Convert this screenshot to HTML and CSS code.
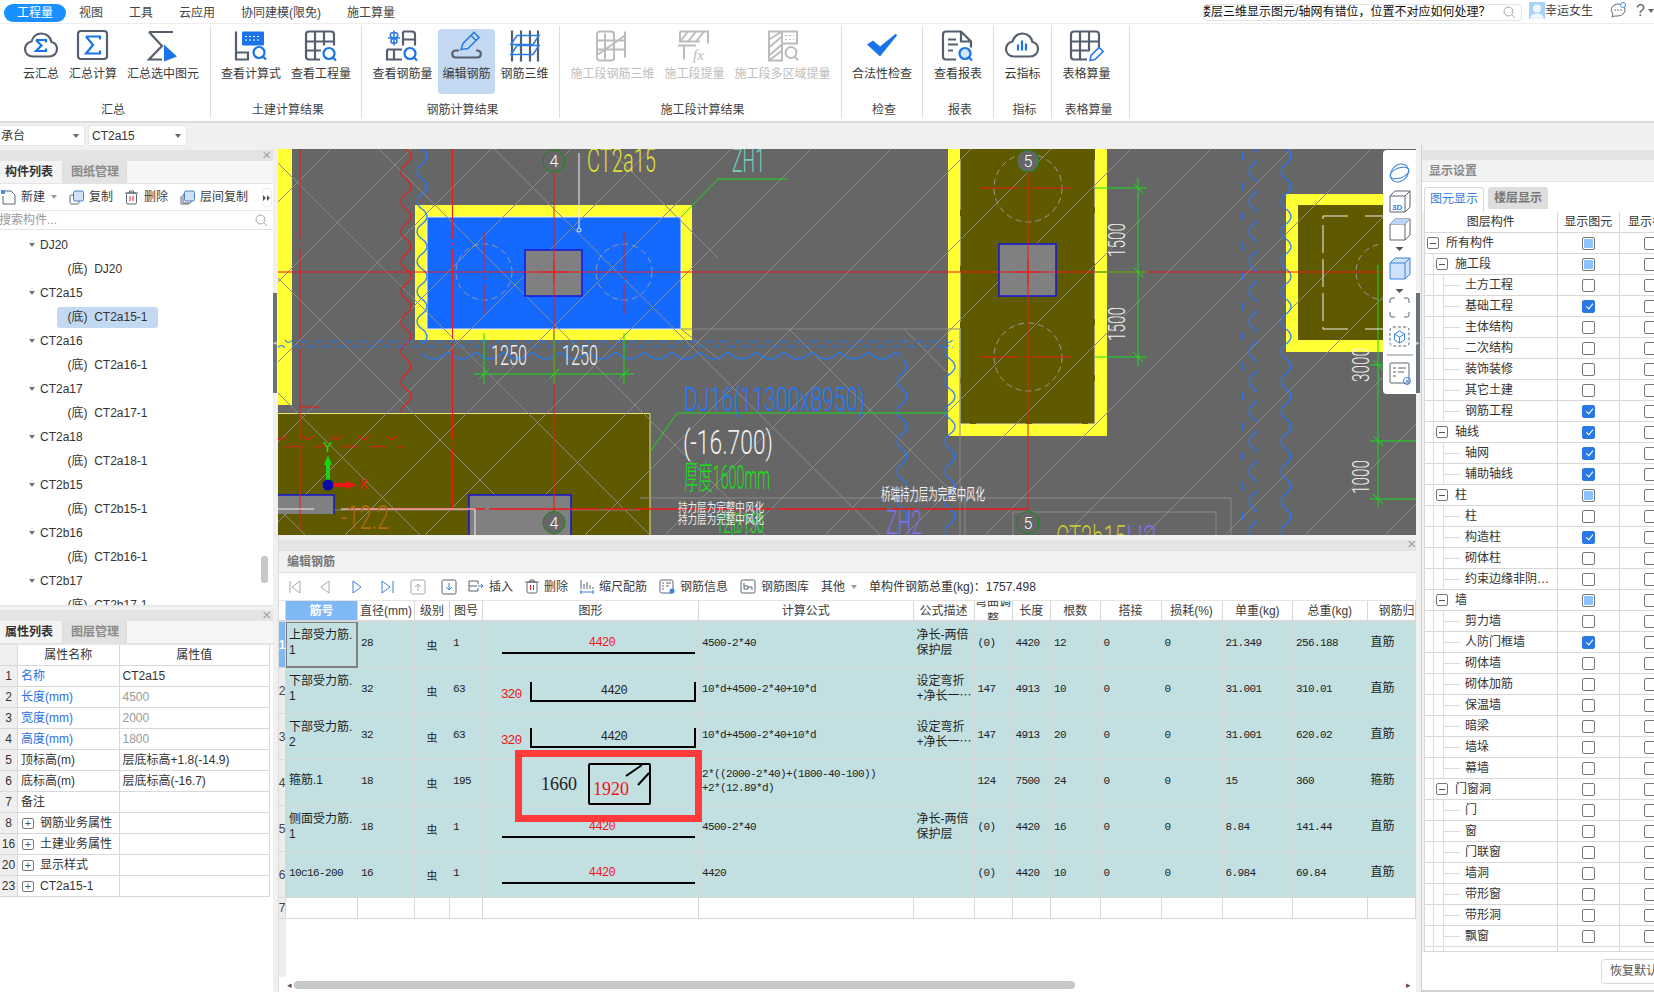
FILE: index.html
```html
<!DOCTYPE html>
<html lang="zh-CN">
<head>
<meta charset="utf-8">
<title>工程量</title>
<link rel="stylesheet" href="styles.css">
</head>
<body>
<div class="app">
  <header class="tabbar">
    <span class="tab active">工程量</span>
    <span class="tab t2">视图</span>
    <span class="tab">工具</span>
    <span class="tab">云应用</span>
    <span class="tab">协同建模(限免)</span>
    <span class="tab">施工算量<i class="newbadge"></i></span>
    <div class="topright">
      <div class="searchq"><span class="q">楼层三维显示图元/轴网有错位，位置不对应如何处理？</span>
        <svg class="ic14" viewBox="0 0 14 14"><circle cx="6.5" cy="6.5" r="4.5" class="s-lg"/><path d="M10 10l3 3" class="s-lg"/></svg></div>
      <svg class="avatar" viewBox="0 0 16 17"><rect width="16" height="17" fill="#a9d2fb"/><circle cx="8" cy="6.5" r="4" fill="#eef6ff"/><path d="M1 17c1-5 4-5.500 7-5.500s6 .5 7 5.500z" fill="#eef6ff"/></svg>
      <span class="uname">幸运女生</span>
      <svg class="chat" viewBox="0 0 18 18"><path d="M3 15l1-3c-4-5 0-10 5-10 4 0 7 3 7 6s-3 6-8 6c-2 0-3 0-5 1z" class="s-g1"/><circle cx="6" cy="8" r=".8" fill="#666"/><circle cx="9" cy="8" r=".8" fill="#666"/><circle cx="12" cy="8" r=".8" fill="#666"/><circle cx="14" cy="3" r="2.500" fill="#fff" stroke="#4a90e2"/></svg>
      <span class="help">?</span><i class="caret dk"></i>
    </div>
  </header>

  <section class="ribbon">
    <div class="grp g1"><div class="btns">
      <div class="btn"><svg class="ri" viewBox="0 0 36 36"><path d="M10 27c-4.500 0-8-3-8-7.500 0-4 3-7 6.500-7.500C10 7 14 4 18.500 4c5 0 9 3.500 10 8.500 3.300.7 5.500 3.500 5.500 7 0 4.300-3.500 7.500-8 7.500z" class="s-g"/><path d="M13 10.500h10v2.500M13 10.500l5.500 5.500-5.500 5.500h10V19" class="s-b"/></svg><span>云汇总</span></div>
      <div class="btn"><svg class="ri" viewBox="0 0 36 36"><rect x="3" y="1.500" width="29" height="28" rx="3" class="s-g"/><path d="M11 7h14v3M11 7l7 8.500-7 8.500h14v-3" class="s-b"/></svg><span>汇总计算</span></div>
      <div class="btn"><svg class="ri" viewBox="0 0 36 36"><path d="M4 2.500h24M4 2.500l13 14L4 30h13" class="s-g"/><path d="M19 15l13 12-13 5z" fill="#1a73e8"/></svg><span>汇总选中图元</span></div>
    </div><div class="gl">汇总</div></div>
    <div class="grp g2"><div class="btns">
      <div class="btn"><svg class="ri" viewBox="0 0 36 36"><path d="M3 2v28h12v-7H3" class="s-g"/><rect x="9" y="2" width="22" height="14" rx="1" fill="#1a73e8"/><path d="M12 7h16M12 10.500h16" stroke="#fff" stroke-dasharray="2 2" fill="none"/><circle cx="26" cy="23" r="5.500" class="s-b"/><path d="M30 27l3 3" class="s-b"/></svg><span>查看计算式</span></div>
      <div class="btn"><svg class="ri" viewBox="0 0 36 36"><path d="M17 30H6a3 3 0 0 1-3-3V5a3 3 0 0 1 3-3h22a3 3 0 0 1 3 3v11M3 12h27M3 21h15M12 2v28M21 2v14" class="s-g"/><circle cx="26" cy="24" r="5.500" class="s-b"/><path d="M30 28l3 3" class="s-b"/></svg><span>查看工程量</span></div>
    </div><div class="gl">土建计算结果</div></div>
    <div class="grp g3"><div class="btns">
      <div class="btn"><svg class="ri" viewBox="0 0 36 36"><path d="M19 2h9a3 3 0 0 1 3 3v11M19 2v14M19 10h12M3 20h15M3 20v10h15M10 20v10" class="s-g"/><path d="M10 1v15M4 8.500h12M10 3c-5 0-5 5 0 5.500M10 3c5 0 5 5 0 5.500M10 9c-4 0-4 5 0 5M10 9c4 0 4 5 0 5" class="s-b1"/><circle cx="26" cy="24" r="5.500" class="s-b"/><path d="M30 28l3 3" class="s-b"/></svg><span>查看钢筋量</span></div>
      <div class="btn on"><svg class="ri" viewBox="0 0 36 36"><path d="M11 21H8c-5 0-5 7 0 7h21c5 0 5-7 0-7h-1" class="s-g"/><path d="M13 20l2-6L26 3l5 5-11 11zM23 6l5 5" class="s-b1"/></svg><span>编辑钢筋</span></div>
      <div class="btn"><svg class="ri" viewBox="0 0 36 36"><path d="M5 1v31M14 1v31M23 1v31M31 1v31" class="s-g"/><path d="M4 15l6-9h22l-6 9zM4 25l6-9h22l-6 9z" class="s-b1"/></svg><span>钢筋三维</span></div>
    </div><div class="gl">钢筋计算结果</div></div>
    <div class="grp g4"><div class="btns dis">
      <div class="btn"><svg class="ri" viewBox="0 0 36 36"><rect x="3" y="2" width="17" height="29" rx="3" fill="#e2e2e2" class="s-d"/><path d="M3 11h28M3 20h28M11 4v26M20 4v26M31 2v26M4 25L31 6" class="s-d"/></svg><span>施工段钢筋三维</span></div>
      <div class="btn"><svg class="ri" viewBox="0 0 36 36"><path d="M4 2h28v12M4 2v10h20M4 12l8-10M12 12l8-10M20 12l8-10M2 16h18M8 16v14" class="s-d"/><text x="17" y="30" class="fx">fx</text></svg><span>施工段提量</span></div>
      <div class="btn"><svg class="ri" viewBox="0 0 36 36"><path d="M4 2h13v29H4zM4 10l13-8M4 18l13-11M4 26l13-11M4 31l13-10M17 2h15v12H17" class="s-d"/><path d="M20 6h9M20 10h9" stroke="#bbb" stroke-dasharray="2 2"/><circle cx="26" cy="23" r="5.500" class="s-d"/><path d="M30 27l3 4" class="s-d"/></svg><span>施工段多区域提量</span></div>
    </div><div class="gl">施工段计算结果</div></div>
    <div class="grp g5"><div class="btns">
      <div class="btn"><svg class="ri" viewBox="0 0 36 36"><path d="M3 15l6-4 7 6L32 4l1 2-17 21z" fill="#1a73e8"/></svg><span>合法性检查</span></div>
    </div><div class="gl">检查</div></div>
    <div class="grp g6"><div class="btns">
      <div class="btn"><svg class="ri" viewBox="0 0 36 36"><path d="M16 30H6a3 3 0 0 1-3-3V5a3 3 0 0 1 3-3h15l10 10v6M21 2v10h10M8 10h8M8 15h10M8 21h5" class="s-g"/><circle cx="25" cy="24" r="5.500" fill="#d3e6fb" class="s-bf"/><path d="M29 28l3 3" class="s-b"/></svg><span>查看报表</span></div>
    </div><div class="gl">报表</div></div>
    <div class="grp g7"><div class="btns">
      <div class="btn"><svg class="ri" viewBox="0 0 36 36"><path d="M10 27c-4.500 0-8-3-8-7.500 0-4 3-7 6.500-7.500C10 7 14 4 18.500 4c5 0 9 3.500 10 8.500 3.300.7 5.500 3.500 5.500 7 0 4.300-3.500 7.500-8 7.500z" class="s-g"/><path d="M14 15v6M18 11v10M22 14v7" class="s-b"/></svg><span>云指标</span></div>
    </div><div class="gl">指标</div></div>
    <div class="grp g8"><div class="btns">
      <div class="btn"><svg class="ri" viewBox="0 0 36 36"><path d="M19 30H6a3 3 0 0 1-3-3V5a3 3 0 0 1 3-3h22a3 3 0 0 1 3 3v13M3 12h28M3 21h18M12 2v28M21 2v20" class="s-g"/><path d="M22 31l1-5 8-8 4 4-8 8z" class="s-b1"/></svg><span>表格算量</span></div>
    </div><div class="gl">表格算量</div></div>
  </section>

  <div class="subbar">
    <div class="sel s1"><span>承台</span><i class="caret"></i></div>
    <div class="sel s2"><span>CT2a15</span><i class="caret"></i></div>
  </div>

  <main class="main">
    <aside class="left">
      <section class="lp lp1">
        <div class="pbar"><span class="x">×</span></div>
        <div class="ltabs"><span class="lt on">构件列表</span><span class="lt">图纸管理</span></div>
        <div class="ltool">
          <span class="ti"><svg class="ic15" viewBox="0 0 15 15"><path d="M3 1h7l4 4v9H2V6" class="s-g1"/><rect width="4" height="4" fill="#4a90e2"/></svg>新建<i class="caret cm"></i></span>
          <span class="ti"><svg class="ic15" viewBox="0 0 15 15"><rect x="1" y="5" width="9" height="9" rx="1.500" class="s-g1"/><rect x="4.500" y="1" width="10" height="10" rx="1.500" fill="#cfe2fa" stroke="#4a7fc1"/></svg>复制</span>
          <span class="ti"><svg class="ic13" viewBox="0 0 13 15"><rect x="1.500" y="3" width="10" height="11" rx="1.500" class="s-g1"/><path d="M0 3h13M4.500 3V1h4v2" class="s-g1"/><path d="M5 6v5M8 6v5" stroke="#d22" fill="none"/></svg>删除</span>
          <span class="ti"><svg class="ic15" viewBox="0 0 15 15"><path d="M1 6v8h8" class="s-g1"/><rect x="3" y="4" width="8" height="9" rx="1" class="s-g1"/><rect x="4.500" y="1" width="10" height="10" rx="1.500" fill="#cfe2fa" stroke="#4a7fc1"/></svg>层间复制</span>
          <span class="more"><svg class="morei" viewBox="0 0 8 8"><path d="M0 1l3 3-3 3zM4 1l3 3-3 3z" fill="#555"/></svg></span>
        </div>
        <div class="lsearch"><span>搜索构件...</span><svg class="ic14" viewBox="0 0 14 14"><circle cx="6.500" cy="6.500" r="4.500" class="s-lg"/><path d="M10 10l3 3" class="s-lg"/></svg></div>
        <div class="tree">
          <div class="tn"><i class="tc"></i>DJ20</div><div class="tl"><span>(底)&nbsp; DJ20</span></div>
          <div class="tn"><i class="tc"></i>CT2a15</div><div class="tl cur"><span>(底)&nbsp; CT2a15-1</span></div>
          <div class="tn"><i class="tc"></i>CT2a16</div><div class="tl"><span>(底)&nbsp; CT2a16-1</span></div>
          <div class="tn"><i class="tc"></i>CT2a17</div><div class="tl"><span>(底)&nbsp; CT2a17-1</span></div>
          <div class="tn"><i class="tc"></i>CT2a18</div><div class="tl"><span>(底)&nbsp; CT2a18-1</span></div>
          <div class="tn"><i class="tc"></i>CT2b15</div><div class="tl"><span>(底)&nbsp; CT2b15-1</span></div>
          <div class="tn"><i class="tc"></i>CT2b16</div><div class="tl"><span>(底)&nbsp; CT2b16-1</span></div>
          <div class="tn"><i class="tc"></i>CT2b17</div><div class="tl"><span>(底)&nbsp; CT2b17-1</span></div>
          <i class="vthumb"></i>
        </div>
      </section>
      <section class="lp lp2">
        <div class="pbar"><span class="x">×</span></div>
        <div class="ltabs"><span class="lt on">属性列表</span><span class="lt">图层管理</span></div>
        <div class="ptable">
          <div class="ph idx"></div><div class="ph">属性名称</div><div class="ph">属性值</div>
          <div class="idx">1</div><div class="pn blue">名称</div><div class="pv">CT2a15</div>
          <div class="idx">2</div><div class="pn blue">长度(mm)</div><div class="pv gray">4500</div>
          <div class="idx">3</div><div class="pn blue">宽度(mm)</div><div class="pv gray">2000</div>
          <div class="idx">4</div><div class="pn blue">高度(mm)</div><div class="pv gray">1800</div>
          <div class="idx">5</div><div class="pn">顶标高(m)</div><div class="pv">层底标高+1.8(-14.9)</div>
          <div class="idx">6</div><div class="pn">底标高(m)</div><div class="pv">层底标高(-16.7)</div>
          <div class="idx">7</div><div class="pn">备注</div><div class="pv"></div>
          <div class="idx">8</div><div class="pn"><i class="plus">+</i>钢筋业务属性</div><div class="pv"></div>
          <div class="idx">16</div><div class="pn"><i class="plus">+</i>土建业务属性</div><div class="pv"></div>
          <div class="idx">20</div><div class="pn"><i class="plus">+</i>显示样式</div><div class="pv"></div>
          <div class="idx">23</div><div class="pn"><i class="plus">+</i>CT2a15-1</div><div class="pv"></div>
        </div>
      </section>
    </aside>

    <div class="split"><i class="grip">◂</i></div>

    <div class="center">
      <div class="canvas">
        <svg class="cad" viewBox="278 149 1138 386" width="1138" height="386">
          <defs>
            <pattern id="ha" width="80" height="80" patternUnits="userSpaceOnUse"><path d="M-8 88L88-8" stroke="#8a8a8a" fill="none"/></pattern>
            <pattern id="hb" width="115" height="115" patternUnits="userSpaceOnUse"><path d="M-8-8L123 123" stroke="#8a8a8a" fill="none"/></pattern>
            <pattern id="wvb" width="16" height="30" patternUnits="userSpaceOnUse" x="0" y="149"><path d="M6 0q10 7.500 0 15T6 30" stroke="#1e78ff" stroke-width="1.200" fill="none"/></pattern>
            <pattern id="wvr" width="16" height="30" patternUnits="userSpaceOnUse" x="0" y="149"><path d="M6 0q10 7.500 0 15T6 30" stroke="#f01818" stroke-width="1.200" fill="none"/></pattern>
            <pattern id="whb" width="15" height="8" patternUnits="userSpaceOnUse"><path d="M0 4q3.750 5 7.500 0T15 4" stroke="#1e78ff" stroke-width="1.200" fill="none"/></pattern>
            <pattern id="whc" width="28" height="12" patternUnits="userSpaceOnUse"><path d="M0 4q14 14 28 0" stroke="#1e78ff" stroke-width="1.200" fill="none"/></pattern>
            <pattern id="whr" width="28" height="12" patternUnits="userSpaceOnUse"><path d="M0 8q14-12 28 0" stroke="#f01818" stroke-width="1.200" fill="none"/></pattern>
          </defs>
          <rect x="278" y="149" width="1138" height="386" fill="#666"/>
          <rect x="278" y="149" width="14" height="256" class="yel"/>
          <rect x="415" y="205" width="277" height="135" class="yel"/>
          <rect x="427" y="217" width="254" height="112" fill="#1469ff" stroke="#e8eeff"/>
          <rect x="278" y="413" width="372" height="122" class="oli"/>
          <path d="M278 413.500H650V535" stroke="#e9e96a" fill="none"/>
          <rect x="948" y="149" width="159" height="287" class="yel"/>
          <rect x="960" y="149" width="135" height="275" class="oli"/>
          <path d="M960 160v264h135V160" stroke="#e8e8c0" stroke-dasharray="50 6" fill="none"/>
          <rect x="1286" y="194" width="130" height="158" class="yel"/>
          <rect x="1298" y="205" width="118" height="135" class="oli"/>
          <rect x="278" y="149" width="1138" height="386" fill="url(#ha)"/>
          <rect x="278" y="149" width="440" height="386" fill="url(#hb)"/>
          <rect x="718" y="329" width="232" height="206" fill="url(#hb)"/>
          <path d="M681 329H960V535M640 498H1231V535M1013 535V512H1216V535M965 498V535M681 329L720 360M278 510H640" stroke="#8a8a8a" fill="none"/>
          <rect x="525" y="250" width="57" height="46" class="col"/>
          <rect x="999" y="244" width="57" height="52" class="col"/>
          <rect x="278" y="495" width="56" height="19" class="colf"/>
          <rect x="469" y="495" width="102" height="40" class="colf"/>
          <path d="M278 495h56v19M469 535V495H571V535" class="colstroke"/>
          <g class="dc"><circle cx="484" cy="272" r="28"/><circle cx="624" cy="272" r="28"/><circle cx="1028" cy="188" r="34"/><circle cx="1028" cy="357" r="34"/><circle cx="1384" cy="272" r="28"/></g>
          <rect x="400" y="149" width="16" height="264" fill="url(#wvr)"/>
          <rect x="278" y="436" width="126" height="12" fill="url(#whr)"/>
          <rect x="416" y="149" width="16" height="195" fill="url(#wvb)"/>
          <rect x="278" y="340" width="675" height="8" fill="url(#whb)"/>
          <rect x="422" y="352" width="480" height="12" fill="url(#whc)"/>
          <rect x="892" y="360" width="16" height="175" fill="url(#wvb)"/>
          <rect x="944" y="345" width="16" height="190" fill="url(#wvb)"/>
          <rect x="1242" y="149" width="16" height="386" fill="url(#wvb)"/>
          <rect x="1280" y="149" width="16" height="386" fill="url(#wvb)"/>
          <path d="M278 272H1416M554 149V535M1028 149V509" class="red"/>
          <path d="M300 149V530M452.500 149V510" class="red dd"/>
          <path d="M484 232V314M624 232V314M980 188H1073M980 357H1073M540 272h28M554 262v20M1014 272h28M1028 258v28M1385 245V320" class="red dd2"/>
          <path d="M345 509H1028" class="red thick"/>
          <path d="M300 407h20" class="red"/>
          <path d="M681 217L718 179H788M650 452L677 413H947" class="grn"/>
          <path d="M474 374H634M484 333V384M554 333V384M624 333V384M479 379l10-10M549 379l10-10M619 379l10-10" class="grn"/>
          <path d="M1095 188H1147M1095 272H1147M1095 357H1147M1138 178V367M1133 183l10 10M1133 267l10 10M1133 352l10 10" class="grn"/>
          <path d="M1378 265V507M1370 441H1416M1370 499H1416M1370 365H1395M1373 360l10 10M1373 436l10 10M1373 494l10 10" class="grn"/>
          <path d="M579 153V228" class="wht"/><circle cx="579" cy="230" r="2" class="wht"/>
          <path d="M278 509h36M341 509H475M475 509V535" class="wht"/>
          <path d="M1348 216H1323V329H1348M1365 216H1385M1365 329H1385" class="wht" stroke-dasharray="28 6"/>
          <g class="lab"><circle cx="554" cy="161" r="11"/><circle cx="554" cy="522.500" r="11"/><circle cx="1028" cy="161" r="11"/><circle cx="1028" cy="522.500" r="11"/></g>
          <text x="554" y="167" class="lt4">4</text><text x="554" y="528.500" class="lt4">4</text><text x="1028" y="167" class="lt4">5</text><text x="1028" y="528.500" class="lt4">5</text>
          <text x="587" y="172" class="ct t-y" textLength="69" lengthAdjust="spacingAndGlyphs">CT2a15</text>
          <text x="732" y="172" class="ct t-t" textLength="33" lengthAdjust="spacingAndGlyphs">ZH1</text>
          <text x="491" y="365" class="ct2 t-w" textLength="36" lengthAdjust="spacingAndGlyphs">1250</text>
          <text x="562" y="365" class="ct2 t-w" textLength="36" lengthAdjust="spacingAndGlyphs">1250</text>
          <text x="684" y="411" class="ct3 t-b" textLength="181" lengthAdjust="spacingAndGlyphs">DJ16(11300x8950)</text>
          <text x="683" y="454" class="ct3 t-w" textLength="90" lengthAdjust="spacingAndGlyphs">(-16.700)</text>
          <text x="684" y="489" class="ct4 t-g" textLength="86" lengthAdjust="spacingAndGlyphs">厚度1600mm</text>
          <text x="716" y="533" class="ct2 t-g" textLength="48" lengthAdjust="spacingAndGlyphs">12@150</text>
          <text x="678" y="512" class="cn t-w" textLength="86" lengthAdjust="spacingAndGlyphs">持力层为完整中风化</text>
          <text x="678" y="524" class="cn t-w" textLength="86" lengthAdjust="spacingAndGlyphs">持力层为完整中风化</text>
          <text x="881" y="500" class="cn2 t-w" textLength="104" lengthAdjust="spacingAndGlyphs">桥端持力层为完整中风化</text>
          <text x="341" y="529" class="ct3 t-o" textLength="48" lengthAdjust="spacingAndGlyphs">-12.2</text>
          <text x="886" y="534" class="ct3 t-p" textLength="36" lengthAdjust="spacingAndGlyphs">ZH2</text>
          <text x="1056" y="549" class="ct3 t-yd" textLength="70" lengthAdjust="spacingAndGlyphs">CT2b15</text>
          <text x="1126" y="549" class="ct3 t-p" textLength="31" lengthAdjust="spacingAndGlyphs">U2</text>
          <text transform="translate(1125 257) rotate(-90)" class="ct5 t-w" textLength="34" lengthAdjust="spacingAndGlyphs">1500</text>
          <text transform="translate(1125 341) rotate(-90)" class="ct5 t-w" textLength="34" lengthAdjust="spacingAndGlyphs">1500</text>
          <text transform="translate(1369 382) rotate(-90)" class="ct5 t-w" textLength="34" lengthAdjust="spacingAndGlyphs">3000</text>
          <text transform="translate(1369 494) rotate(-90)" class="ct5 t-w" textLength="34" lengthAdjust="spacingAndGlyphs">1000</text>
          <path d="M328 480V464" stroke="#17d417" stroke-width="4"/><path d="M328 455l-4 10h8z" fill="#17d417"/>
          <path d="M333 485h14" stroke="#f01818" stroke-width="4"/><path d="M357 485l-11-4v8z" fill="#f01818"/>
          <circle cx="328" cy="485" r="5.500" fill="#0a0aa8"/>
          <text x="323" y="452" class="axt t-g">Y</text><text x="359" y="489" class="axt t-r">X</text>
        </svg>
        <div class="views">
          <svg class="vi" viewBox="0 0 33 244">
            <ellipse cx="16.500" cy="23" rx="8" ry="10" class="s-bl" transform="rotate(45 16.500 23)"/><ellipse cx="16.500" cy="23" rx="10" ry="5" class="s-bl" transform="rotate(-20 16.500 23)"/>
            <path d="M7 46l5-5h15v16l-5 5H7zM7 46h15v16M22 46l5-5" class="s-g1"/><text x="9" y="60" class="t3d">3D</text>
            <path d="M7 74l5-5h15v16l-5 5H7zM7 74h15v16M22 74l5-5" class="s-g1"/><path d="M7 74l5-5h15l-5 5z" fill="#bcd6f7"/>
            <path d="M12.500 97h8l-4 4z" fill="#555"/>
            <path d="M7 113l5-5h15v16l-5 5H7z" fill="#cfe2fa" stroke="#3b82dc"/><path d="M7 113h15v16M22 113l5-5" fill="none" stroke="#3b82dc"/>
            <path d="M12.500 139h8l-4 4z" fill="#555"/>
            <path d="M7 153v-3a2 2 0 0 1 2-2h3M21 148h3a2 2 0 0 1 2 2v3M26 162v3a2 2 0 0 1-2 2h-3M12 167H9a2 2 0 0 1-2-2v-3" class="s-g1"/>
            <rect x="7" y="177" width="19" height="19" rx="3" class="s-g1" stroke-dasharray="3 2"/><path d="M16.500 181l5 3v6l-5 3-5-3v-6zM11.500 184l5 3 5-3M16.500 187v6" class="s-bl"/>
            <path d="M4 205h26" stroke="#888"/>
            <path d="M8 213h17a1 1 0 0 1 1 1v19H8a1 1 0 0 1-1-1v-18a1 1 0 0 1 1-1zM10 218h3M15 218h8M10 222h3M15 222h6M10 226h3" class="s-g1"/><circle cx="24" cy="231" r="3.500" fill="#fff" class="s-bl"/><circle cx="24" cy="231" r="1" fill="#3b82dc"/>
          </svg>
        </div>
      </div>
      <section class="editor">
        <div class="ebar"><span class="x">×</span></div>
        <div class="etitle">编辑钢筋</div>
        <div class="etool">
          <svg class="nav" viewBox="0 0 31 16"><path d="M11 2v12M21 2l-8 6 8 6z" class="s-lg"/></svg>
          <svg class="nav" viewBox="0 0 31 16"><path d="M19 2l-8 6 8 6z" class="s-lg"/></svg>
          <svg class="nav" viewBox="0 0 31 16"><path d="M12 2l8 6-8 6z" class="s-bl"/></svg>
          <svg class="nav" viewBox="0 0 31 16"><path d="M10 2l8 6-8 6zM21 2v12" class="s-bl"/></svg>
          <svg class="nav" viewBox="0 0 31 16"><rect x="8" y="1" width="14" height="14" rx="1.500" class="s-lg"/><path d="M15 12V5M12 8l3-3 3 3" class="s-lg"/></svg>
          <svg class="nav" viewBox="0 0 31 16"><rect x="8" y="1" width="14" height="14" rx="1.500" class="s-g1"/><path d="M15 4v7M12 8l3 3 3-3" class="s-bl"/></svg>
          <div class="etools">
            <span class="ti"><svg class="ic16" viewBox="0 0 16 15"><path d="M1 2h9v3M10 9v3H1V2M1 7h8" class="s-g1"/><path d="M10 7h5M13 5l2 2-2 2" class="s-bl"/></svg>插入</span>
            <span class="ti"><svg class="ic14b" viewBox="0 0 14 15"><rect x="2" y="3" width="10" height="11" rx="1.500" class="s-g1"/><path d="M0 3h14M5 3V1h4v2" class="s-g1"/><path d="M5.500 6v5M8.500 6v5" stroke="#d22" fill="none"/></svg>删除</span>
            <span class="ti"><svg class="ic14b" viewBox="0 0 14 15"><path d="M1 1v9M4 5v5M7 3v7M10 6v4M13 8v2" class="s-g1"/><path d="M0 13h14M1 11v4M13 11v4" class="s-bl"/></svg>缩尺配筋</span>
            <span class="ti"><svg class="ic16" viewBox="0 0 16 15"><rect x="1" y="1" width="13" height="13" rx="1.500" class="s-g1"/><path d="M3 4h2M7 4h5M3 7h2M7 7h3M3 10h2" class="s-g1"/><circle cx="13" cy="12" r="2.500" fill="#3b82dc"/></svg>钢筋信息</span>
            <span class="ti"><svg class="ic16" viewBox="0 0 16 15"><rect x="1" y="1" width="14" height="13" rx="1.500" class="s-g1"/><path d="M4 4v6h4V7H4M8 8h4v3" class="s-g1"/></svg>钢筋图库</span>
            <span class="ti">其他<i class="caret cm"></i></span>
            <span class="total">单构件钢筋总重(kg)：1757.498</span>
          </div>
        </div>
        <div class="tablewrap">
          <div class="tr hd">
            <div class="c"></div><div class="c sel-h">筋号</div><div class="c">直径(mm)</div><div class="c">级别</div><div class="c">图号</div><div class="c">图形</div><div class="c">计算公式</div><div class="c">公式描述</div><div class="c wrap">弯曲调整</div><div class="c">长度</div><div class="c">根数</div><div class="c">搭接</div><div class="c">损耗(%)</div><div class="c">单重(kg)</div><div class="c">总重(kg)</div><div class="c left11">钢筋归类</div>
          </div>
          <div class="tr rw">
            <div class="c ix on">1</div><div class="c t active">上部受力筋.<br>1</div><div class="c m">28</div><div class="c g">虫</div><div class="c m">1</div>
            <div class="c s"><svg class="shape" viewBox="0 0 216 46"><text x="119" y="24" class="sm red-t">4420</text><path d="M19 31H212" class="bar"/></svg></div>
            <div class="c m">4500-2*40</div><div class="c t">净长-两倍<br>保护层</div><div class="c m">(0)</div><div class="c m">4420</div><div class="c m">12</div><div class="c m">0</div><div class="c m">0</div><div class="c m">21.349</div><div class="c m">256.188</div><div class="c t">直筋</div>
          </div>
          <div class="tr rw">
            <div class="c ix">2</div><div class="c t">下部受力筋.<br>1</div><div class="c m">32</div><div class="c g">虫</div><div class="c m">63</div>
            <div class="c s"><svg class="shape" viewBox="0 0 216 46"><text x="28" y="30" class="sm2 red-t">320</text><text x="131" y="26" class="sm">4420</text><path d="M48 14V33H212V14" class="bar"/></svg></div>
            <div class="c m">10*d+4500-2*40+10*d</div><div class="c t">设定弯折<br>+净长一⋯</div><div class="c m">147</div><div class="c m">4913</div><div class="c m">10</div><div class="c m">0</div><div class="c m">0</div><div class="c m">31.001</div><div class="c m">310.01</div><div class="c t">直筋</div>
          </div>
          <div class="tr rw">
            <div class="c ix">3</div><div class="c t">下部受力筋.<br>2</div><div class="c m">32</div><div class="c g">虫</div><div class="c m">63</div>
            <div class="c s"><svg class="shape" viewBox="0 0 216 46"><text x="28" y="30" class="sm2 red-t">320</text><text x="131" y="26" class="sm">4420</text><path d="M48 14V33H212V14" class="bar"/></svg></div>
            <div class="c m">10*d+4500-2*40+10*d</div><div class="c t">设定弯折<br>+净长一⋯</div><div class="c m">147</div><div class="c m">4913</div><div class="c m">20</div><div class="c m">0</div><div class="c m">0</div><div class="c m">31.001</div><div class="c m">620.02</div><div class="c t">直筋</div>
          </div>
          <div class="tr rw">
            <div class="c ix">4</div><div class="c t">箍筋.1</div><div class="c m">18</div><div class="c g">虫</div><div class="c m">195</div>
            <div class="c s"><svg class="shape" viewBox="0 0 216 46"><text x="76" y="30" class="big">1660</text><rect x="106" y="4" width="61" height="40" rx="1" class="bar"/><text x="128" y="35" class="big red-t">1920</text><path d="M143 16L159 5M155 25L166 13" class="bar"/></svg></div>
            <div class="c m">2*((2000-2*40)+(1800-40-100))<br>+2*(12.89*d)</div><div class="c t"></div><div class="c m">124</div><div class="c m">7500</div><div class="c m">24</div><div class="c m">0</div><div class="c m">0</div><div class="c m">15</div><div class="c m">360</div><div class="c t">箍筋</div>
          </div>
          <div class="tr rw">
            <div class="c ix">5</div><div class="c t">侧面受力筋.<br>1</div><div class="c m">18</div><div class="c g">虫</div><div class="c m">1</div>
            <div class="c s"><svg class="shape" viewBox="0 0 216 46"><text x="119" y="24" class="sm red-t">4420</text><path d="M19 31H212" class="bar"/></svg></div>
            <div class="c m">4500-2*40</div><div class="c t">净长-两倍<br>保护层</div><div class="c m">(0)</div><div class="c m">4420</div><div class="c m">16</div><div class="c m">0</div><div class="c m">0</div><div class="c m">8.84</div><div class="c m">141.44</div><div class="c t">直筋</div>
          </div>
          <div class="tr rw">
            <div class="c ix">6</div><div class="c m">10c16-200</div><div class="c m">16</div><div class="c g">虫</div><div class="c m">1</div>
            <div class="c s"><svg class="shape" viewBox="0 0 216 46"><text x="119" y="24" class="sm red-t">4420</text><path d="M19 31H212" class="bar"/></svg></div>
            <div class="c m">4420</div><div class="c t"></div><div class="c m">(0)</div><div class="c m">4420</div><div class="c m">10</div><div class="c m">0</div><div class="c m">0</div><div class="c m">6.984</div><div class="c m">69.84</div><div class="c t">直筋</div>
          </div>
          <div class="tr blank">
            <div class="c ix">7</div><div class="c"></div><div class="c"></div><div class="c"></div><div class="c"></div><div class="c"></div><div class="c"></div><div class="c"></div><div class="c"></div><div class="c"></div><div class="c"></div><div class="c"></div><div class="c"></div><div class="c"></div><div class="c"></div><div class="c"></div>
          </div>
          <div class="trest"><i></i></div>
          <div class="redframe"></div>
        </div>
        <div class="hscroll"><i class="ar">◂</i><i class="thumb"></i><i class="ar r">▸</i></div>
      </section>
    </div>

    <div class="split"><i class="grip">▸</i></div>

    <aside class="right">
      <div class="pbar"></div>
      <div class="rtitle">显示设置</div>
      <div class="rtabs"><span class="rt on">图元显示</span><span class="rt">楼层显示</span></div>
      <div class="dtable">
        <div class="dc1 dh">图层构件</div><div class="dc1 dh">显示图元</div><div class="dc1 dh cl">显示名称</div>
        <div class="dn l0"><i class="minus"></i>所有构件</div><div class="dc1"><i class="cb pt"></i></div><div class="dc1"><i class="cb"></i></div>
        <div class="dn l1"><i class="minus"></i>施工段</div><div class="dc1"><i class="cb pt"></i></div><div class="dc1"><i class="cb"></i></div>
        <div class="dn l2">土方工程</div><div class="dc1"><i class="cb"></i></div><div class="dc1"><i class="cb"></i></div>
        <div class="dn l2">基础工程</div><div class="dc1"><i class="cb ck"></i></div><div class="dc1"><i class="cb"></i></div>
        <div class="dn l2">主体结构</div><div class="dc1"><i class="cb"></i></div><div class="dc1"><i class="cb"></i></div>
        <div class="dn l2">二次结构</div><div class="dc1"><i class="cb"></i></div><div class="dc1"><i class="cb"></i></div>
        <div class="dn l2">装饰装修</div><div class="dc1"><i class="cb"></i></div><div class="dc1"><i class="cb"></i></div>
        <div class="dn l2">其它土建</div><div class="dc1"><i class="cb"></i></div><div class="dc1"><i class="cb"></i></div>
        <div class="dn l2">钢筋工程</div><div class="dc1"><i class="cb ck"></i></div><div class="dc1"><i class="cb"></i></div>
        <div class="dn l1"><i class="minus"></i>轴线</div><div class="dc1"><i class="cb ck"></i></div><div class="dc1"><i class="cb"></i></div>
        <div class="dn l2">轴网</div><div class="dc1"><i class="cb ck"></i></div><div class="dc1"><i class="cb"></i></div>
        <div class="dn l2">辅助轴线</div><div class="dc1"><i class="cb ck"></i></div><div class="dc1"><i class="cb"></i></div>
        <div class="dn l1"><i class="minus"></i>柱</div><div class="dc1"><i class="cb pt"></i></div><div class="dc1"><i class="cb"></i></div>
        <div class="dn l2">柱</div><div class="dc1"><i class="cb"></i></div><div class="dc1"><i class="cb"></i></div>
        <div class="dn l2">构造柱</div><div class="dc1"><i class="cb ck"></i></div><div class="dc1"><i class="cb"></i></div>
        <div class="dn l2">砌体柱</div><div class="dc1"><i class="cb"></i></div><div class="dc1"><i class="cb"></i></div>
        <div class="dn l2">约束边缘非阴…</div><div class="dc1"><i class="cb"></i></div><div class="dc1"><i class="cb"></i></div>
        <div class="dn l1"><i class="minus"></i>墙</div><div class="dc1"><i class="cb pt"></i></div><div class="dc1"><i class="cb"></i></div>
        <div class="dn l2">剪力墙</div><div class="dc1"><i class="cb"></i></div><div class="dc1"><i class="cb"></i></div>
        <div class="dn l2">人防门框墙</div><div class="dc1"><i class="cb ck"></i></div><div class="dc1"><i class="cb"></i></div>
        <div class="dn l2">砌体墙</div><div class="dc1"><i class="cb"></i></div><div class="dc1"><i class="cb"></i></div>
        <div class="dn l2">砌体加筋</div><div class="dc1"><i class="cb"></i></div><div class="dc1"><i class="cb"></i></div>
        <div class="dn l2">保温墙</div><div class="dc1"><i class="cb"></i></div><div class="dc1"><i class="cb"></i></div>
        <div class="dn l2">暗梁</div><div class="dc1"><i class="cb"></i></div><div class="dc1"><i class="cb"></i></div>
        <div class="dn l2">墙垛</div><div class="dc1"><i class="cb"></i></div><div class="dc1"><i class="cb"></i></div>
        <div class="dn l2">幕墙</div><div class="dc1"><i class="cb"></i></div><div class="dc1"><i class="cb"></i></div>
        <div class="dn l1"><i class="minus"></i>门窗洞</div><div class="dc1"><i class="cb"></i></div><div class="dc1"><i class="cb"></i></div>
        <div class="dn l2">门</div><div class="dc1"><i class="cb"></i></div><div class="dc1"><i class="cb"></i></div>
        <div class="dn l2">窗</div><div class="dc1"><i class="cb"></i></div><div class="dc1"><i class="cb"></i></div>
        <div class="dn l2">门联窗</div><div class="dc1"><i class="cb"></i></div><div class="dc1"><i class="cb"></i></div>
        <div class="dn l2">墙洞</div><div class="dc1"><i class="cb"></i></div><div class="dc1"><i class="cb"></i></div>
        <div class="dn l2">带形窗</div><div class="dc1"><i class="cb"></i></div><div class="dc1"><i class="cb"></i></div>
        <div class="dn l2">带形洞</div><div class="dc1"><i class="cb"></i></div><div class="dc1"><i class="cb"></i></div>
        <div class="dn l2">飘窗</div><div class="dc1"><i class="cb"></i></div><div class="dc1"><i class="cb"></i></div>
        <div class="dn l2"></div><div class="dc1"><i class="cb"></i></div><div class="dc1"><i class="cb"></i></div>
      </div>
      <div class="rfoot"><span class="rbtn">恢复默认设置</span></div>
    </aside>
  </main>
</div>
</body>
</html>
```
FILE: styles.css
```css
* { box-sizing: border-box; }
html, body { margin: 0; padding: 0; height: 992px; overflow: hidden; }
body { background: #f0f0f0; font: 12px/16px "Liberation Sans", "Noto Sans CJK SC", sans-serif; color: #333; }
i { font-style: normal; }
svg { display: block; flex: none; }
.app { width: 1654px; height: 992px; display: flex; flex-direction: column; overflow: hidden; }

/* stroke helpers */
.s-g { fill: none; stroke: #565f6e; stroke-width: 2.2; }
.s-g1 { fill: none; stroke: #5a6270; stroke-width: 1; }
.s-b { fill: none; stroke: #1a73e8; stroke-width: 2.2; }
.s-bf { stroke: #1a73e8; stroke-width: 2.2; }
.s-b1 { fill: none; stroke: #2a7de6; stroke-width: 1.6; }
.s-bl { fill: none; stroke: #3b82dc; stroke-width: 1; }
.s-lg { fill: none; stroke: #a8a8a8; stroke-width: 1; }
.s-d { fill: none; stroke: #bcbcbc; stroke-width: 2; }
.fx { font: italic 15px "Liberation Serif", serif; fill: #bbb; }

/* tabs */
.tabbar { height: 24px; background: #fff; border-bottom: 1px solid #eee; display: flex; align-items: flex-end; padding: 0 0 1px 4px; gap: 26px; flex: none; }
.tab { position: relative; line-height: 18px; white-space: nowrap; color: #444; }
.tab.active { width: 62px; height: 18px; border-radius: 9px; background: #1890ff; color: #fff; text-align: center; margin-right: -13px; }
.newbadge { position: absolute; left: 25px; top: -20px; width: 26px; height: 3px; background: #e02020; }
.topright { margin-left: auto; display: flex; align-items: center; height: 23px; align-self: flex-end; }
.searchq { width: 319px; height: 17px; margin-top: 3px; border: 1px solid #e4e4e4; border-radius: 3px; display: flex; align-items: center; justify-content: space-between; padding-right: 5px; overflow: hidden; }
.searchq .q { color: #111; white-space: nowrap; margin-left: -5px; line-height: 15px; }
.ic14 { width: 14px; height: 14px; }
.avatar { width: 16px; height: 17px; margin-left: 7px; }
.uname { color: #444; }
.chat { width: 18px; height: 18px; margin-left: 16px; }
.help { font-size: 16px; color: #666; margin-left: 9px; }
.caret { width: 0; height: 0; border: 3px solid transparent; border-top: 4px solid #666; border-bottom: 0; display: inline-block; }
.caret.dk { margin-left: 3px; }
.caret.cm { border-top-color: #999; margin-left: 1px; vertical-align: middle; }

/* ribbon */
.ribbon { height: 99px; background: #fff; border-bottom: 2px solid #dcdcdc; display: flex; padding: 2px 0 0 12px; flex: none; }
.grp { height: 92px; border-right: 1px solid #dcdcdc; padding-top: 3px; display: flex; flex-direction: column; flex: none; }
.g1 { width: 199px; } .g2 { width: 151px; } .g3 { width: 198px; } .g4 { width: 282px; }
.g5 { width: 81px; } .g6 { width: 71px; } .g7 { width: 58px; } .g8 { width: 78px; padding-right: 8px; }
.btns { display: flex; justify-content: center; gap: 2px; height: 67px; }
.btn { padding: 0 4px; border-radius: 4px; display: flex; flex-direction: column; align-items: center; white-space: nowrap; color: #3a3a3a; }
.btn.on { background: #c3d9f1; }
.ri { width: 36px; height: 37px; }
.dis .btn { color: #bdbdbd; }
.gl { text-align: center; margin-top: 8px; padding-left: 4px; color: #444; }

/* sub bar */
.subbar { height: 22px; display: flex; padding-top: 2px; gap: 3px; background: #f0f0f0; flex: none; }
.sel { height: 21px; background: #fff; border: 1px solid #e6e6e6; border-radius: 3px 3px 0 0; display: flex; align-items: center; justify-content: space-between; }
.sel span { color: #333; }
.s1 { width: 99px; margin-left: -14px; padding: 0 5px 0 14px; }
.s2 { width: 99px; padding: 0 5px 0 3px; }

/* main */
.main { flex: 1; display: flex; min-height: 0; }
.left { width: 273px; display: flex; flex-direction: column; padding-top: 5px; gap: 4px; flex: none; }
.lp { background: #fff; display: flex; flex-direction: column; }
.lp1 { height: 456px; overflow: hidden; }
.lp2 { flex: 1; }
.pbar { height: 11px; background: #e4e4e4; position: relative; flex: none; }
.x { position: absolute; right: 2px; top: -3px; color: #a0a0a0; font-size: 15px; line-height: 15px; }
.ltabs { height: 23px; display: flex; background: #f6f6f6; border-bottom: 1px solid #e4e4e4; flex: none; }
.lt { height: 22px; line-height: 22px; width: 65px; padding-left: 8px; background: #e2e2e2; color: #8a8a8a; font-weight: 700; border: 1px solid #ddd; border-width: 0 1px; }
.lt.on { width: 62px; padding-left: 5px; background: #f4f4f4; color: #333; border: 0; }
.ltool { height: 27px; display: flex; align-items: center; gap: 12px; padding-left: 1px; border-bottom: 1px solid #e8e8e8; flex: none; position: relative; }
.ti { display: inline-flex; align-items: center; gap: 5px; white-space: nowrap; color: #3c3c3c; }
.ic15 { width: 15px; height: 15px; } .ic13 { width: 13px; height: 15px; margin-right: 1px; }
.ic16 { width: 16px; height: 15px; } .ic14b { width: 14px; height: 15px; }
.more { position: absolute; right: 1px; top: 4px; width: 10px; height: 19px; border: 1px solid #eee; border-radius: 3px; display: flex; align-items: center; justify-content: center; }
.morei { width: 8px; height: 8px; }
.lsearch { height: 19px; display: flex; align-items: center; justify-content: space-between; padding-right: 5px; border-bottom: 1px solid #e4e4e4; color: #9a9a9a; overflow: hidden; flex: none; }
.lsearch span { margin-left: -1px; }
.tree { position: relative; padding-top: 3px; flex: 1; overflow: hidden; border-bottom: 1px solid #e4e4e4; }
.tn, .tl { height: 24px; display: flex; align-items: center; white-space: nowrap; color: #333; }
.tn { padding-left: 29px; }
.tc { width: 0; height: 0; border: 3px solid transparent; border-top: 4px solid #777; border-bottom: 0; margin-right: 5px; }
.tl { padding-left: 57px; }
.tl span { padding: 0 10.500px; height: 21px; line-height: 21px; border-radius: 3px; }
.tl.cur span { background: #c3d9f1; }
.vthumb { position: absolute; right: 5px; top: 326px; width: 7px; height: 27px; background: #c8c8c8; border-radius: 3px; }

.ptable { display: grid; grid-template-columns: 18px 101.500px 150.500px; grid-auto-rows: 21px; border-top: 1px solid #e4e4e4; }
.ptable > div { border-right: 1px solid #d8d8d8; border-bottom: 1px solid #d8d8d8; display: flex; align-items: center; white-space: nowrap; }
.ph { justify-content: center; }
.ptable .idx { background: #efefef; justify-content: center; }
.pn, .pv { padding-left: 3px; }
.blue { color: #2c6fe0; } .gray { color: #999; }
.plus { width: 12px; height: 11px; margin: 0 6px 0 1px; border: 1px solid #777; border-radius: 2px; display: flex; align-items: center; justify-content: center; font-size: 11px; line-height: 9px; color: #555; }

.split { width: 5px; background: #f0f0f0; padding-top: 148px; flex: none; }
.grip { display: block; height: 100px; width: 4px; background: #6a737d; color: #ccc; font-size: 7px; line-height: 100px; overflow: hidden; }

/* centre */
.center { width: 1138px; padding-top: 4px; display: flex; flex-direction: column; flex: none; }
.canvas { height: 386px; position: relative; overflow: hidden; flex: none; }
.cad { position: absolute; left: 0; top: 0; }
.yel { fill: #ffff33; } .oli { fill: #5f5a00; }
.col { fill: #808080; stroke: #1414d8; stroke-width: 1.500; }
.colf { fill: #808080; }
.colstroke { fill: none; stroke: #1414d8; stroke-width: 1.500; }
.dc circle { fill: none; stroke: #9a9a9a; stroke-dasharray: 6 4; }
.red { fill: none; stroke: #f01818; stroke-width: 1; }
.dd { stroke-dasharray: 90 4 2 4; }
.dd2 { stroke-dasharray: 40 4 4 4; }
.thick { stroke-width: 1.500; stroke-dasharray: 110 4 26 4; }
.grn { fill: none; stroke: #17e017; stroke-width: 1; }
.wht { fill: none; stroke: #f0f0f0; stroke-width: 1; }
.lab circle { fill: #666; stroke: #118c11; }
.lt4 { font: 300 16px Roboto, sans-serif; fill: #fff; text-anchor: middle; }
.ct { font: 300 33px Roboto, sans-serif; }
.ct2 { font: 300 27px Roboto, sans-serif; }
.ct3 { font: 300 34px Roboto, sans-serif; }
.ct4 { font: 300 33px Roboto, "Noto Sans CJK SC", sans-serif; }
.ct5 { font: 300 24px Roboto, sans-serif; }
.cn, .cn2 { font: 400 12px "Noto Sans CJK SC", sans-serif; }
.cn2 { font-size: 16px; }
.t-y { fill: #e0e030; } .t-yd { fill: #c8c830; } .t-t { fill: #70d0c0; } .t-w { fill: #f0f0f0; } .t-b { fill: #1e78ff; }
.t-g { fill: #17e017; } .t-o { fill: #b06a10; } .t-p { fill: #7a70e8; } .t-r { fill: #f01818; }
.axt { font: 14px "Liberation Sans", sans-serif; }
.views { position: absolute; right: 0; top: 1px; width: 33px; height: 244px; background: #fff; border-radius: 4px 0 0 4px; }
.vi { width: 33px; height: 244px; }
.t3d { font: 700 8px "Liberation Sans", sans-serif; fill: #2a7de6; }

/* editor */
.editor { flex: 1; display: flex; flex-direction: column; min-height: 0; padding-top: 5px; border-left: 1px solid #dcdcdc; background: #f0f0f0; }
.ebar { height: 10px; background: #e4e4e4; position: relative; flex: none; }
.ebar .x { top: -4px; right: 0; }
.etitle { height: 23px; line-height: 22px; padding-left: 8px; background: #f2f2f2; border-top: 1px solid #e0e0e0; border-bottom: 1px solid #e0e0e0; color: #777; font-weight: 700; flex: none; }
.etool { height: 28px; display: flex; align-items: center; background: #fff; border-bottom: 1px solid #e4e4e4; flex: none; }
.nav { width: 31px; height: 16px; }
.etools { display: flex; align-items: center; gap: 12px; margin-left: 3px; }
.total { margin-left: 0; white-space: nowrap; color: #333; }
.tablewrap { flex: 1; position: relative; background: #fff; display: flex; flex-direction: column; min-height: 0; overflow: hidden; }
.tr { display: grid; grid-template-columns: 7px 72px 57px 35px 33px 216px 214.500px 61px 38px 38.500px 49.500px 61px 61px 70.500px 74.500px 48.500px; flex: none; }
.hd { height: 21px; }
.rw { height: 46px; background: #c2dfe2; }
.blank { height: 21px; }
.c { border-right: 1px solid #d8d8d8; border-bottom: 1px solid #d8d8d8; display: flex; align-items: center; padding: 0 0 4px 3px; overflow: hidden; white-space: nowrap; min-width: 0; }
.hd .c { justify-content: center; padding: 0; color: #3c3c3c; border-bottom-width: 2px; }
.hd .sel-h { background: #7fb8f5; color: #fff; font-weight: 700; }
.hd .wrap { white-space: normal; line-height: 17px; text-align: center; width: 100%; }
.hd .left11 { justify-content: flex-start; padding-left: 11px; }
.t { line-height: 15px; color: #1f1f1f; }
.t.active { border: 2px solid #808080; border-top-width: 1px; border-left-width: 1px; padding-left: 2px; }
.m { font: 11px/14px "Liberation Mono", monospace; letter-spacing: -.6px; color: #222; }
.g { font-size: 11px; padding: 2px 0 0 0; justify-content: center; color: #222; }
.s { padding: 0; }
.shape { width: 216px; height: 46px; }
.ix { padding: 0; justify-content: center; background: #ededed; overflow: visible; font-size: 12px; color: #444; }
.ix.on { background: #7fb8f5; color: #fff; font-weight: 700; }
.blank .ix { background: #ededed; }
.sm { font: 12px "Liberation Mono", monospace; text-anchor: middle; fill: #222; letter-spacing: -.6px; }
.sm2 { font: 13px "Liberation Mono", monospace; text-anchor: middle; letter-spacing: -1px; }
.big { font: 18px "Liberation Serif", serif; text-anchor: middle; fill: #222; }
.red-t { fill: #f01414; }
.bar { fill: none; stroke: #000; stroke-width: 2; }
.trest { flex: 1; display: flex; }
.trest i { width: 7px; background: #eee; }
.redframe { position: absolute; left: 236px; top: 149px; width: 187px; height: 72px; border: 7px solid #ff3b3b; }
.hscroll { height: 15px; background: #fff; display: flex; align-items: center; flex: none; color: #555; font-size: 9px; }
.ar { width: 12px; text-align: right; margin-left: 1px; }
.thumb { width: 781px; height: 8px; margin-left: 2px; background: #c8c8c8; border-radius: 4px; }
.ar.r { margin-left: auto; margin-right: 5px; }

/* right */
.right { width: 233px; background: #f0f0f0; padding-top: 5px; display: flex; flex-direction: column; border-left: 1px solid #d0d0d0; flex: none; overflow: hidden; }
.right .pbar { height: 10px; }
.rtitle { height: 21px; margin-top: 1px; line-height: 21px; padding-left: 7px; color: #888; font-weight: 700; background: #f2f2f2; border-bottom: 1px solid #e4e4e4; flex: none; }
.rtabs { height: 30px; padding: 5px 0 0 2px; background: #fff; display: flex; gap: 4px; flex: none; }
.rt { width: 60px; height: 22px; line-height: 22px; text-align: center; background: #dedede; color: #777; font-weight: 700; border-radius: 3px 3px 0 0; }
.rt.on { height: 25px; background: #fff; color: #2f7de8; font-weight: 400; border: 1px solid #d8d8d8; border-bottom: 0; }
.dtable { margin-left: 2px; height: 740px; overflow: hidden; display: grid; grid-template-columns: 132.500px 62.500px 62px; grid-auto-rows: 21px; border-left: 1px solid #d8d8d8; border-bottom: 1px solid #d8d8d8; background: #fff; flex: none; position: relative; }
.dc1, .dn { border-right: 1px solid #d8d8d8; border-bottom: 1px solid #d8d8d8; display: flex; align-items: center; white-space: nowrap; overflow: hidden; }
.dc1 { justify-content: center; }
.dh { color: #333; }
.cl { justify-content: flex-start; padding-left: 8px; }
.dn { color: #333; }
.l0 { padding-left: 2px; }
.l1 { padding-left: 11px; background: linear-gradient(#ddd, #ddd) 8px 0/1px 100% no-repeat; }
.l2 { padding-left: 40px; background: linear-gradient(#ddd, #ddd) 8px 0/1px 100% no-repeat, linear-gradient(#ddd, #ddd) 18px 0/1px 100% no-repeat, linear-gradient(#ddd, #ddd) 18px 50%/17px 1px no-repeat; }
.minus { width: 12px; height: 12px; margin-right: 7px; background: linear-gradient(#555, #555) center/6px 1px no-repeat #fff; border: 1px solid #777; border-radius: 2px; flex: none; }
.cb { width: 13px; height: 13px; border: 1px solid #777; border-radius: 2px; background: #fff; flex: none; position: relative; }
.cb.pt { background: #8ec3ff; box-shadow: inset 0 0 0 1px #fff; }
.cb.ck { background: #2a78e6; border-color: #2a78e6; }
.cb.ck::after { content: ""; position: absolute; left: 3px; top: 1.500px; width: 6px; height: 3px; border-left: 1.500px solid #fff; border-bottom: 1.500px solid #fff; transform: rotate(-50deg) translate(-1px, 1px); }
.rfoot { flex: 1; background: #fff; display: flex; justify-content: flex-start; padding: 7px 0 0 179px; border-bottom: 2px solid #cfcfcf; }
.rbtn { height: 25px; line-height: 23px; padding: 0 8px; border: 1px solid #d8d8d8; border-radius: 4px; white-space: nowrap; color: #555; }
```
